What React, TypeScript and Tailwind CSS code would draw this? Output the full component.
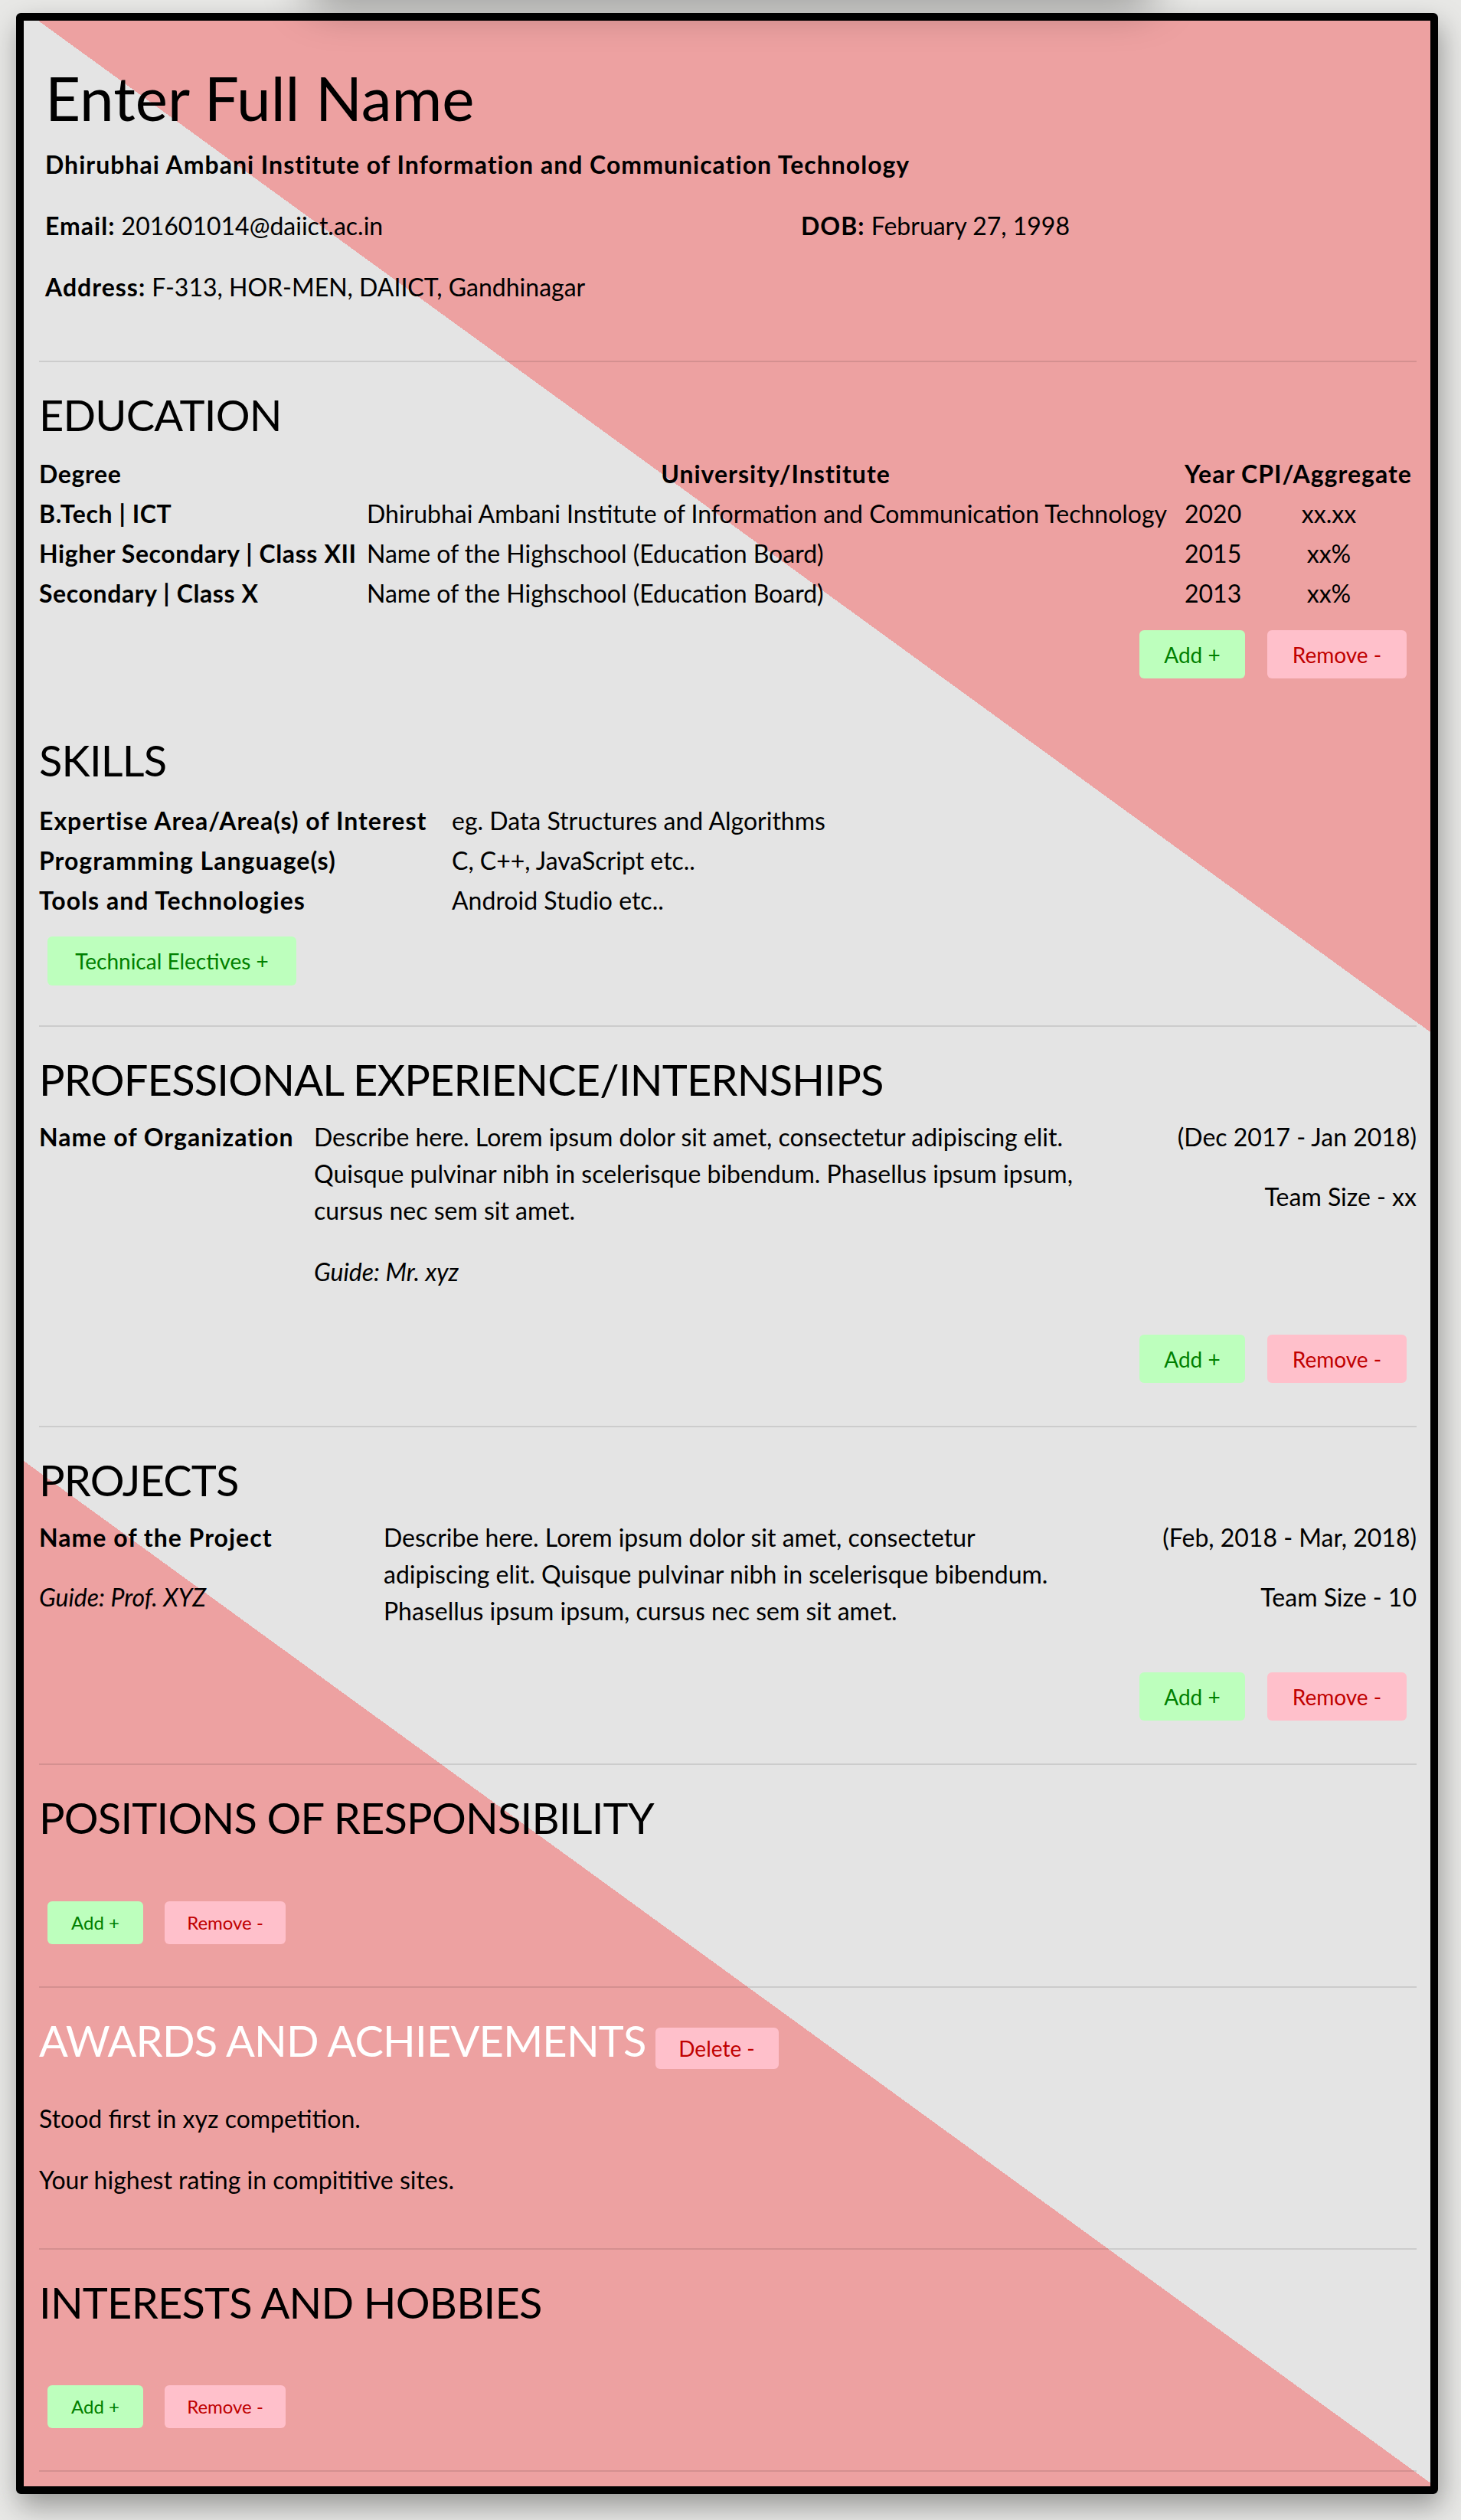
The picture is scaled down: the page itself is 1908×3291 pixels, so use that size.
import React from "react";

const education = [
	{ degree: "B.Tech | ICT", school: "Dhirubhai Ambani Institute of Information and Communication Technology", year: "2020", score: "xx.xx" },
	{ degree: "Higher Secondary | Class XII", school: "Name of the Highschool (Education Board)", year: "2015", score: "xx%" },
	{ degree: "Secondary | Class X", school: "Name of the Highschool (Education Board)", year: "2013", score: "xx%" },
];

const skills = [
	{ label: "Expertise Area/Area(s) of Interest", value: "eg. Data Structures and Algorithms" },
	{ label: "Programming Language(s)", value: "C, C++, JavaScript etc.." },
	{ label: "Tools and Technologies", value: "Android Studio etc.." },
];

function Rule({ className = "" }: { className?: string }) {
	return <div className={`border-t-[2px] border-[rgba(0,0,0,0.1)] ${className}`} />;
}

function Heading({ children }: { children: React.ReactNode }) {
	return <h3 className="mt-[35px] mb-[18px] text-[56px] leading-[67px] font-normal tracking-[-0.8px]">{children}</h3>;
}

function AddRemove({ className = "mt-[54px]" }: { className?: string }) {
	return (
		<div className={`flex justify-end gap-[29px] pr-[13px] ${className}`}>
			<button className="h-[63px] w-[138px] rounded-[6px] bg-[#bdffbd] text-[28px] leading-[42px] text-[#008000]">Add +</button>
			<button className="h-[63px] w-[182px] rounded-[6px] bg-[#ffc0cb] text-[28px] leading-[42px] text-[#c00000]">Remove -</button>
		</div>
	);
}

function SmallAddRemove({ className = "" }: { className?: string }) {
	return (
		<div className={`ml-[11px] flex gap-[28px] ${className}`}>
			<button className="h-[56px] w-[125px] rounded-[6px] bg-[#bdffbd] text-[24px] leading-[36px] text-[#008000]">Add +</button>
			<button className="h-[56px] w-[158px] rounded-[6px] bg-[#ffc0cb] text-[24px] leading-[36px] text-[#c00000]">Remove -</button>
		</div>
	);
}

export default function App() {
	return (
		<div className="relative min-h-[3291px] overflow-hidden bg-[#e8e8e6] pt-[17px] pb-[34px] font-['Lato',sans-serif] text-[32px] leading-[48px] text-black">
			{/* soft shadow bleeding in from above the page */}
			<div className="pointer-events-none absolute left-[400px] top-[-55px] z-10 h-[60px] w-[1110px] rounded-full bg-black/40 blur-[28px]" />

			<div className="ml-[21px] w-[1857px] rounded-[6px] border-[10px] border-black bg-[linear-gradient(36deg,#eda1a1_29.4%,#e4e4e4_29.4%,#e4e4e4_71%,#eda1a1_71%)] pl-[20px] pr-[18px] pb-[19px] shadow-[4px_16px_36px_rgba(0,0,0,0.35)]">
				{/* header */}
				<div className="pt-[52px] pl-[8px]">
					<h1 className="text-[80px] leading-[96px] font-normal">Enter Full Name</h1>
					<p className="mt-[16px] font-bold tracking-[1px]">Dhirubhai Ambani Institute of Information and Communication Technology</p>
					<div className="mt-[32px] grid grid-cols-[987px_1fr]">
						<p>
							<b className="tracking-[1px]">Email:</b> 201601014@daiict.ac.in
						</p>
						<p>
							<b className="tracking-[1px]">DOB:</b> February 27, 1998
						</p>
					</div>
					<p className="mt-[32px]">
						<b className="tracking-[1px]">Address:</b> F-313, HOR-MEN, DAIICT, Gandhinagar
					</p>
				</div>
				<Rule className="mt-[72px]" />

				{/* education */}
				<Heading>EDUCATION</Heading>
				<div className="grid grid-cols-[428px_1068px_74px_1fr] leading-[52px] whitespace-nowrap">
					<div className="font-bold tracking-[0.6px]">Degree</div>
					<div className="text-center font-bold tracking-[1px]">University/Institute</div>
					<div className="font-bold tracking-[1px]">Year</div>
					<div className="font-bold tracking-[1px]">CPI/Aggregate</div>
					{education.map((row) => (
						<React.Fragment key={row.degree}>
							<div className="font-bold tracking-[0.6px]">{row.degree}</div>
							<div>{row.school}</div>
							<div>{row.year}</div>
							<div className="text-center">{row.score}</div>
						</React.Fragment>
					))}
				</div>
				<AddRemove className="mt-[22px]" />

				{/* skills */}
				<h3 className="mt-[73px] mb-[20px] text-[56px] leading-[67px] font-normal tracking-[-0.8px]">SKILLS</h3>
				<div className="grid grid-cols-[539px_1fr] leading-[52px]">
					{skills.map((s) => (
						<React.Fragment key={s.label}>
							<div className="font-bold tracking-[1px]">{s.label}</div>
							<div>{s.value}</div>
						</React.Fragment>
					))}
				</div>
				<button className="mt-[21px] ml-[11px] h-[64px] w-[325px] rounded-[6px] bg-[#bdffbd] text-[28px] leading-[42px] text-[#008000]">
					Technical Electives +
				</button>
				<Rule className="mt-[52px]" />

				{/* experience */}
				<Heading>PROFESSIONAL EXPERIENCE/INTERNSHIPS</Heading>
				<div className="grid grid-cols-[359px_1020px_1fr]">
					<div className="font-bold tracking-[1px]">Name of Organization</div>
					<div>
						<p>
							Describe here. Lorem ipsum dolor sit amet, consectetur adipiscing elit.
							<br />
							Quisque pulvinar nibh in scelerisque bibendum. Phasellus ipsum ipsum,
							<br />
							cursus nec sem sit amet.
						</p>
						<p className="mt-[32px] italic">Guide: Mr. xyz</p>
					</div>
					<div className="text-right">
						<p>(Dec 2017 - Jan 2018)</p>
						<p className="mt-[30px]">Team Size - xx</p>
					</div>
				</div>
				<AddRemove className="mt-[58px]" />
				<Rule className="mt-[56px]" />

				{/* projects */}
				<Heading>PROJECTS</Heading>
				<div className="grid grid-cols-[450px_920px_1fr]">
					<div>
						<p className="font-bold tracking-[1px]">Name of the Project</p>
						<p className="mt-[30px] italic">Guide: Prof. XYZ</p>
					</div>
					<p>
						Describe here. Lorem ipsum dolor sit amet, consectetur
						<br />
						adipiscing elit. Quisque pulvinar nibh in scelerisque bibendum.
						<br />
						Phasellus ipsum ipsum, cursus nec sem sit amet.
					</p>
					<div className="text-right">
						<p>(Feb, 2018 - Mar, 2018)</p>
						<p className="mt-[30px]">Team Size - 10</p>
					</div>
				</div>
				<AddRemove className="mt-[56px]" />
				<Rule className="mt-[56px]" />

				{/* positions */}
				<Heading>POSITIONS OF RESPONSIBILITY</Heading>
				<SmallAddRemove className="mt-[76px]" />
				<Rule className="mt-[55px]" />

				{/* awards */}
				<div className="mt-[35px] flex items-baseline">
					<h3 className="text-[56px] leading-[67px] font-normal tracking-[-0.8px] text-white">AWARDS AND ACHIEVEMENTS</h3>
					<button className="ml-[12px] w-[161px] rounded-[6px] bg-[#ffc0cb] py-[6px] text-[28px] leading-[42px] text-[#c00000]">Delete -</button>
				</div>
				<p className="mt-[41px]">Stood first in xyz competition.</p>
				<p className="mt-[32px]">Your highest rating in compititive sites.</p>
				<Rule className="mt-[65px]" />

				{/* interests */}
				<Heading>INTERESTS AND HOBBIES</Heading>
				<SmallAddRemove className="mt-[75px]" />
				<Rule className="mt-[55px]" />
			</div>
		</div>
	);
}
